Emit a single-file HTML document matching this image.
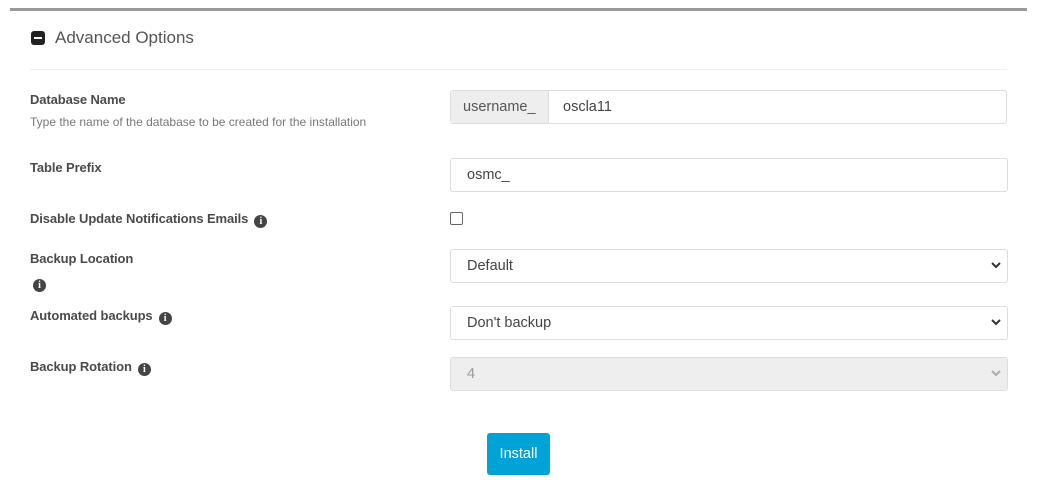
<!DOCTYPE html>
<html><head><style>
body{margin:0;width:1037px;height:495px;background:#fff;font-family:"Liberation Sans",sans-serif;position:relative;overflow:hidden}
.a{position:absolute}
.lbl{position:absolute;left:30px;font-size:13px;font-weight:bold;color:#4a4a4a;white-space:nowrap;letter-spacing:-0.1px}
.inp{position:absolute;left:450px;width:555px;height:32px;border:1px solid #ddd;border-radius:3px;background:#fff;font-size:14.5px;color:#444;box-sizing:content-box}
.inp span{position:absolute;left:16px;top:8px}
.chev{position:absolute;right:6px;top:11px}
.info{display:inline-block;width:13px;height:13px;border-radius:50%;background:#444;color:#fff;font-size:10px;font-weight:bold;text-align:center;line-height:13px;font-family:"Liberation Serif",serif;vertical-align:-1px;margin-left:6px}
</style></head><body>
<div class="a" style="left:10px;top:8px;width:1017px;height:3px;background:#999"></div>
<div class="a" style="left:31px;top:31px;width:14px;height:14px;background:#222;border-radius:3px"><div style="position:absolute;left:3px;top:6px;width:8px;height:2px;background:#fff"></div></div>
<div class="a" style="left:55px;top:28px;font-size:17px;color:#555">Advanced Options</div>
<div class="a" style="left:30px;top:69px;width:977px;height:1px;background:#eee"></div>

<div class="lbl" style="top:92px">Database Name</div>
<div class="a" style="left:30px;top:115px;font-size:12px;color:#777">Type the name of the database to be created for the installation</div>
<div class="inp" style="top:90px">
<div style="position:absolute;left:0;top:0;width:97px;height:32px;background:#eee;border-right:1px solid #ddd;border-radius:3px 0 0 3px"></div>
<span style="left:12px;color:#555">username_</span><span style="left:112px">oscla11</span></div>

<div class="lbl" style="top:160px">Table Prefix</div>
<div class="inp" style="top:158px;width:556px"><span>osmc_</span></div>

<div class="lbl" style="top:211px">Disable Update Notifications Emails<span class="info">i</span></div>
<div class="a" style="left:450px;top:212px;width:11px;height:11px;border:1px solid #666;border-radius:2px"></div>

<div class="lbl" style="top:251px">Backup Location</div>
<div class="a" style="left:27px;top:274px"><span class="info">i</span></div>
<div class="inp" style="top:249px;width:556px"><span>Default</span><svg class="chev" width="10" height="8" viewBox="0 0 10 8"><path d="M1 2l4 4 4-4" fill="none" stroke="#333" stroke-width="2"/></svg></div>

<div class="lbl" style="top:308px">Automated backups<span class="info">i</span></div>
<div class="inp" style="top:306px;width:556px"><span>Don't backup</span><svg class="chev" width="10" height="8" viewBox="0 0 10 8"><path d="M1 2l4 4 4-4" fill="none" stroke="#333" stroke-width="2"/></svg></div>

<div class="lbl" style="top:359px">Backup Rotation<span class="info">i</span></div>
<div class="inp" style="top:357px;width:556px;background:#eee"><span style="color:#999">4</span><svg class="chev" width="10" height="8" viewBox="0 0 10 8"><path d="M1 2l4 4 4-4" fill="none" stroke="#aaa" stroke-width="2"/></svg></div>

<div class="a" style="left:487px;top:433px;width:63px;height:42px;background:#00a3d6;border-radius:3px;color:#fff;font-size:14.5px;text-align:center;line-height:42px">Install</div>
</body></html>
